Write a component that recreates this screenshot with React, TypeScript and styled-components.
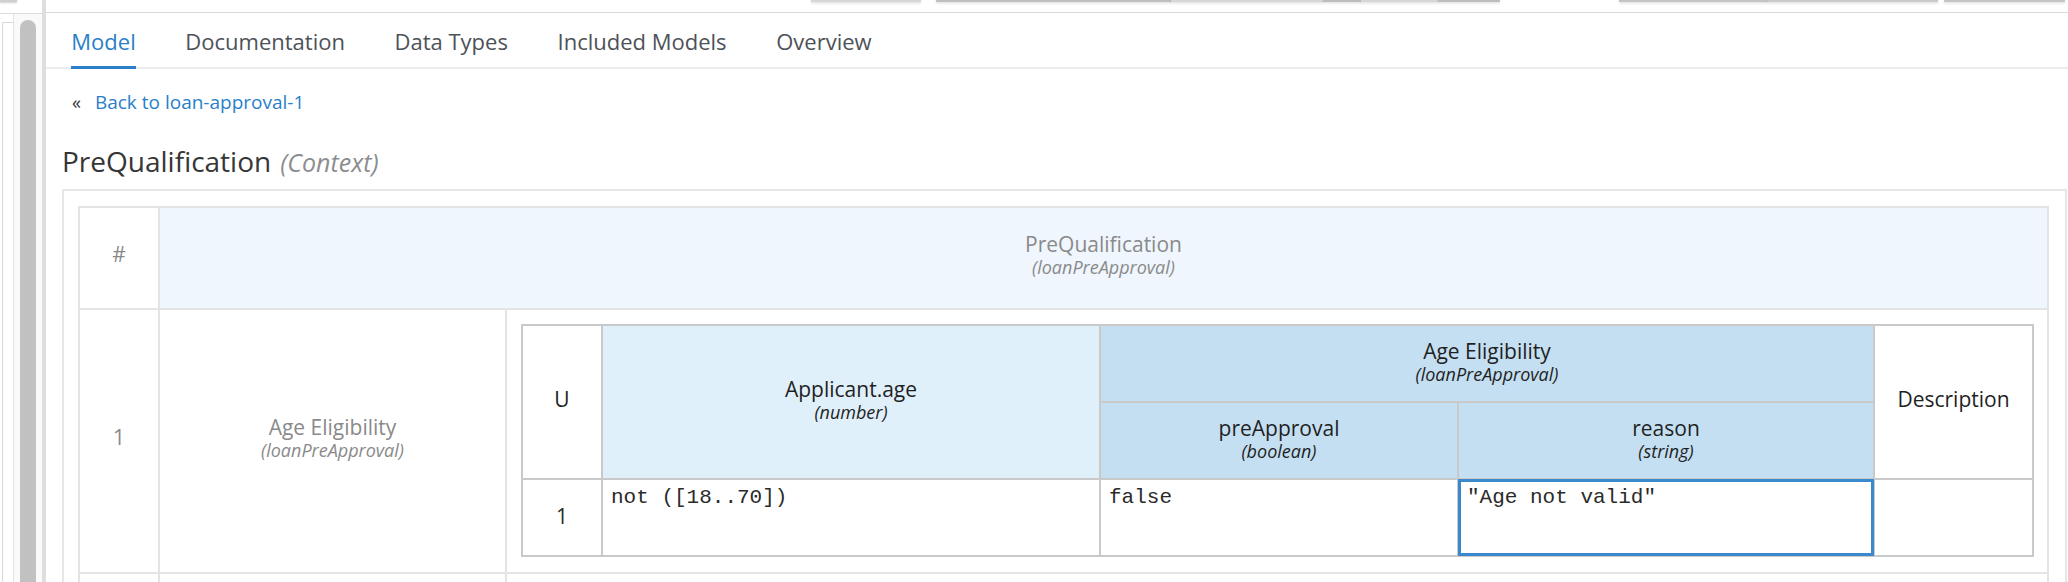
import React from 'react';
import styled, { createGlobalStyle } from 'styled-components';

const GlobalStyle = createGlobalStyle`
  html, body { margin: 0; padding: 0; background: #ffffff; }
  body { font-family: "Open Sans", "Noto Sans", sans-serif; color: #363636; }
  #root { height: 582px; overflow: hidden; }
  * { box-sizing: border-box; }
`;

const Page = styled.div`
  display: flex;
  width: 2068px;
  height: 582px;
  overflow: hidden;
`;

/* ---------- left sidebar with scroll track ---------- */
const Sidebar = styled.aside`
  flex: 0 0 46px;
  display: flex;
  flex-direction: column;
  border-right: 4px solid #dedede;
  background: #ffffff;
`;

const SideHeader = styled.div`
  flex: 0 0 14px;
  border-bottom: 1px solid #dcdcdc;
  display: flex;
  align-items: flex-start;
`;

const SideStub = styled.div`
  width: 17px;
  height: 2px;
  background: #cfcfcf;
  box-shadow: 0 1px 2px rgba(0, 0, 0, 0.2);
`;

const SideBody = styled.div`
  flex: 1;
  display: flex;
`;

const LeftPanel = styled.div`
  flex: 0 0 13px;
  padding-top: 8px;
`;

const PanelEdge = styled.div`
  margin-left: 2px;
  height: 100%;
  border-left: 1px solid #d8d8d8;
  border-top: 1px solid #d8d8d8;
`;

const ScrollTrack = styled.div`
  flex: 1;
  background: #fafafa;
  border-left: 1px solid #e4e4e4;
  padding: 6px 0 0 6px;
`;

const ScrollThumb = styled.div`
  width: 16px;
  height: 100%;
  border-radius: 8px 8px 0 0;
  background: #c1c1c1;
`;

/* ---------- main area ---------- */
const Main = styled.main`
  flex: 1;
  display: flex;
  flex-direction: column;
  min-width: 0;
`;

const TopStrip = styled.div`
  flex: 0 0 13px;
  border-bottom: 1px solid #dadada;
  display: flex;
  align-items: flex-start;
`;

const Stub = styled.div<{ $gap: number; $w: number; $tone: string }>`
  margin-left: ${(p) => p.$gap}px;
  width: ${(p) => p.$w}px;
  height: 2px;
  background: ${(p) => p.$tone};
  box-shadow: 0 1px 3px rgba(0, 0, 0, 0.18);
`;

const TabBar = styled.nav`
  flex: 0 0 56px;
  display: flex;
  align-items: stretch;
  border-bottom: 2px solid #ececec;
  padding-left: 0.5px;
`;

const Tab = styled.div<{ $active?: boolean }>`
  margin: 0 24.8px -2px;
  display: flex;
  align-items: center;
  padding-top: 2px;
  font-size: 22px;
  color: ${(p) => (p.$active ? '#2a7fc8' : '#4d5258')};
  border-bottom: 3px solid ${(p) => (p.$active ? '#2a7fc8' : 'transparent')};
`;

const Content = styled.section`
  flex: 0 0 auto;
  padding: 0 1px 0 16px;
`;

const BackRow = styled.div`
  margin-top: 20px;
  padding-left: 10px;
  height: 26px;
  display: flex;
  align-items: center;
  gap: 14px;
  font-size: 19px;
  line-height: 26px;
`;

const Chevrons = styled.span`
  color: #363636;
  font-size: 18px;
`;

const BackLink = styled.a`
  color: #2a7fc8;
  text-decoration: none;
`;

const Heading = styled.h1`
  margin: 27px 0 0;
  font-size: 28px;
  line-height: 38px;
  font-weight: 400;
  color: #363636;
`;

const HeadingKind = styled.span`
  margin-left: 9px;
  font-size: 25px;
  font-style: italic;
  color: #8b8d8f;
`;

const Box = styled.div`
  margin-top: 8px;
  border: 2px solid #e6e6e6;
  padding: 15px 16px 0 14px;
`;

/* ---------- outer context table ---------- */
const ContextTable = styled.table`
  width: 100%;
  border-collapse: collapse;
  table-layout: fixed;
`;

const Col = styled.col<{ $w?: number }>`
  width: ${(p) => (p.$w ? `${p.$w}px` : 'auto')};
`;

const CtxCell = styled.td<{ $head?: boolean; $h?: number }>`
  border: 2px solid #e4e4e4;
  height: ${(p) => (p.$h ? `${p.$h}px` : 'auto')};
  background: ${(p) => (p.$head ? '#eff6fd' : '#ffffff')};
  color: #8a8a8a;
  font-size: 21px;
  text-align: center;
  vertical-align: middle;
  padding: 0 0 9px;
`;

const NestCell = styled.td`
  border: 2px solid #e4e4e4;
  padding: 14px 13px 15px 14px;
  vertical-align: top;
`;

const Label = styled.div`
  font-size: 21px;
  line-height: 26px;
`;

const SubLabel = styled.div`
  font-size: 18px;
  line-height: 20px;
  font-style: italic;
`;

/* ---------- nested decision table ---------- */
const DecisionTable = styled.table`
  width: 100%;
  border-collapse: collapse;
  table-layout: fixed;
`;

type Tone = 'plain' | 'input' | 'output';

const toneBg: Record<Tone, string> = {
  plain: '#ffffff',
  input: '#dff0fb',
  output: '#c5dff2',
};

const DHead = styled.th<{ $tone: Tone }>`
  border: 2px solid #c9c9c9;
  height: 77px;
  background: ${(p) => toneBg[p.$tone]};
  color: #1f1f1f;
  font-weight: 400;
  text-align: center;
  vertical-align: middle;
  padding: 0 0 6px;
`;

const DCell = styled.td<{ $num?: boolean; $selected?: boolean }>`
  border: 2px solid #c9c9c9;
  height: 77px;
  padding: ${(p) => (p.$num ? '0 0 3px' : '6px 8px')};
  vertical-align: ${(p) => (p.$num ? 'middle' : 'top')};
  text-align: ${(p) => (p.$num ? 'center' : 'left')};
  font-family: ${(p) => (p.$num ? '"Open Sans", sans-serif' : '"Liberation Mono", "Courier New", monospace')};
  font-size: 21px;
  line-height: 24px;
  color: #2a2a2a;
  outline: ${(p) => (p.$selected ? '3px solid #3a89cc' : 'none')};
  outline-offset: -3px;
`;

const stubs = [
  { gap: 765, w: 110, tone: '#d6d6d6' },
  { gap: 15, w: 235, tone: '#bfbfbf' },
  { gap: 0, w: 152, tone: '#d6d6d6' },
  { gap: 0, w: 38, tone: '#bdbdbd' },
  { gap: 0, w: 77, tone: '#d6d6d6' },
  { gap: 0, w: 62, tone: '#bdbdbd' },
  { gap: 119, w: 149, tone: '#c4c4c4' },
  { gap: 0, w: 170, tone: '#cacaca' },
  { gap: 6, w: 121, tone: '#c4c4c4' },
];

const tabs = ['Model', 'Documentation', 'Data Types', 'Included Models', 'Overview'];

export default function App() {
  return (
    <>
      <GlobalStyle />
      <Page>
        <Sidebar>
          <SideHeader>
            <SideStub />
          </SideHeader>
          <SideBody>
            <LeftPanel>
              <PanelEdge />
            </LeftPanel>
            <ScrollTrack>
              <ScrollThumb />
            </ScrollTrack>
          </SideBody>
        </Sidebar>

        <Main>
          <TopStrip>
            {stubs.map((s, i) => (
              <Stub key={i} $gap={s.gap} $w={s.w} $tone={s.tone} />
            ))}
          </TopStrip>

          <TabBar>
            {tabs.map((t, i) => (
              <Tab key={t} $active={i === 0}>
                {t}
              </Tab>
            ))}
          </TabBar>

          <Content>
            <BackRow>
              <Chevrons>«</Chevrons>
              <BackLink href="#">Back to loan-approval-1</BackLink>
            </BackRow>

            <Heading>
              PreQualification
              <HeadingKind>(Context)</HeadingKind>
            </Heading>

            <Box>
              <ContextTable>
                <colgroup>
                  <Col $w={80} />
                  <Col $w={347} />
                  <Col />
                </colgroup>
                <tbody>
                  <tr>
                    <CtxCell $h={102}>#</CtxCell>
                    <CtxCell $head colSpan={2}>
                      <Label>PreQualification</Label>
                      <SubLabel>(loanPreApproval)</SubLabel>
                    </CtxCell>
                  </tr>
                  <tr>
                    <CtxCell $h={262}>1</CtxCell>
                    <CtxCell>
                      <Label>Age Eligibility</Label>
                      <SubLabel>(loanPreApproval)</SubLabel>
                    </CtxCell>
                    <NestCell>
                      <DecisionTable>
                        <colgroup>
                          <Col $w={80} />
                          <Col $w={498} />
                          <Col $w={358} />
                          <Col $w={416} />
                          <Col />
                        </colgroup>
                        <thead>
                          <tr>
                            <DHead $tone="plain" rowSpan={2}>
                              <Label>U</Label>
                            </DHead>
                            <DHead $tone="input" rowSpan={2}>
                              <Label>Applicant.age</Label>
                              <SubLabel>(number)</SubLabel>
                            </DHead>
                            <DHead $tone="output" colSpan={2}>
                              <Label>Age Eligibility</Label>
                              <SubLabel>(loanPreApproval)</SubLabel>
                            </DHead>
                            <DHead $tone="plain" rowSpan={2}>
                              <Label>Description</Label>
                            </DHead>
                          </tr>
                          <tr>
                            <DHead $tone="output">
                              <Label>preApproval</Label>
                              <SubLabel>(boolean)</SubLabel>
                            </DHead>
                            <DHead $tone="output">
                              <Label>reason</Label>
                              <SubLabel>(string)</SubLabel>
                            </DHead>
                          </tr>
                        </thead>
                        <tbody>
                          <tr>
                            <DCell $num>1</DCell>
                            <DCell>not ([18..70])</DCell>
                            <DCell>false</DCell>
                            <DCell $selected>"Age not valid"</DCell>
                            <DCell />
                          </tr>
                        </tbody>
                      </DecisionTable>
                    </NestCell>
                  </tr>
                  <tr>
                    <CtxCell $h={120} />
                    <CtxCell />
                    <CtxCell />
                  </tr>
                </tbody>
              </ContextTable>
            </Box>
          </Content>
        </Main>
      </Page>
    </>
  );
}
